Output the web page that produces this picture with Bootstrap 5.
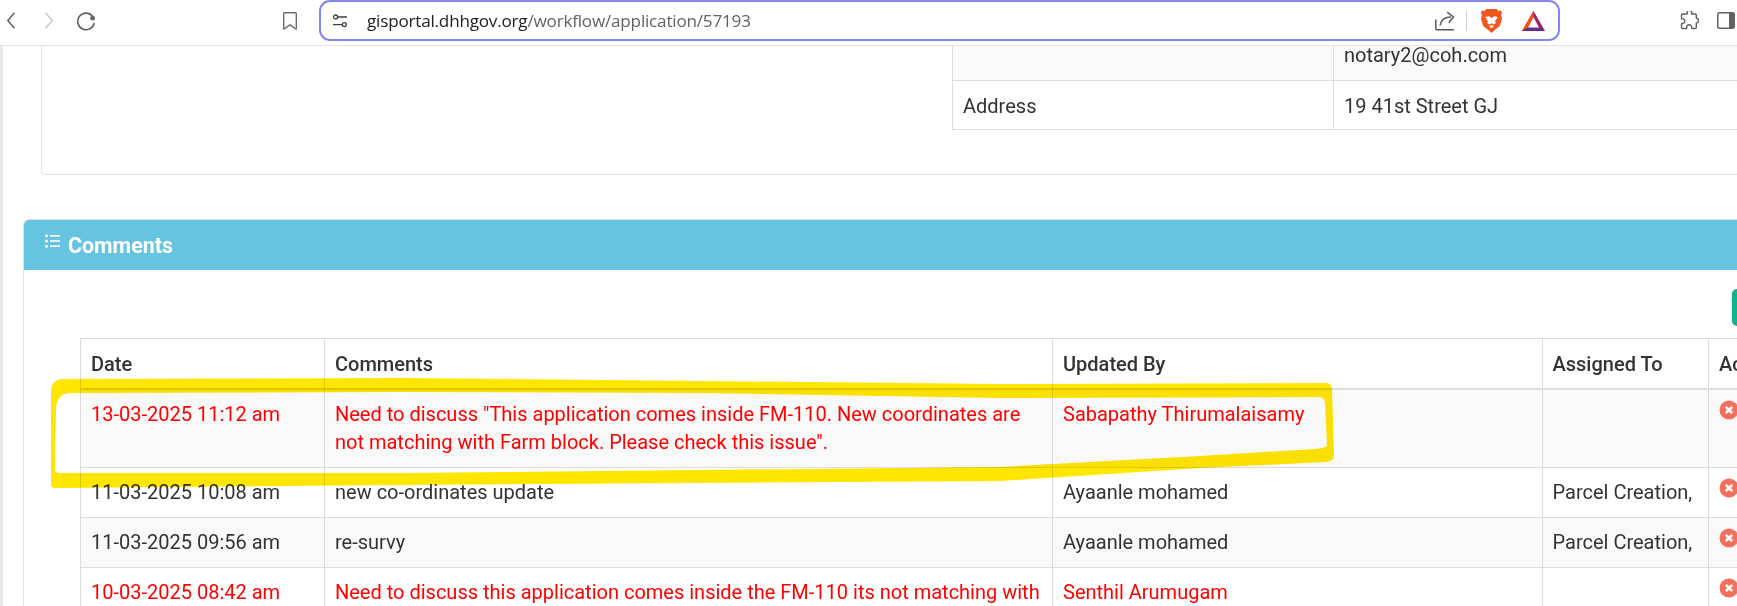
<!DOCTYPE html>
<html lang="en">
<head>
<meta charset="utf-8">
<title>Application 57193</title>
<link href="https://cdn.jsdelivr.net/npm/bootstrap@5.3.0/dist/css/bootstrap.min.css" rel="stylesheet">
<style>
html,body{width:1737px;height:606px;overflow:hidden;background:#fff}
body{font-family:Roboto,sans-serif;font-size:20px;line-height:28px;color:#333;position:relative}
.tb{height:46px;padding-bottom:4px;border-bottom:1px solid #e3e3e3;background:#fff;position:relative;z-index:2}
.tb svg{display:block;flex:none}
.tb-back{margin-left:7px}
.tb-fwd{margin-left:30px}
.tb-rel{margin-left:23px}
.tb-mark{margin-left:187px}
.urlbox{margin-left:22px;width:1241px;height:41px;border:2.5px solid #8585ee;border-top-width:2px;border-radius:11px;flex:none;padding:0 13px 0 12px;background:#fff}
.urltxt{margin-left:20px;font:17.1px/1 "Open Sans",sans-serif;color:#5f6368;white-space:nowrap;letter-spacing:-.2px}
.urltxt b{font-weight:400;color:#202124}
.tb-share{margin-left:auto}
.tb-div{width:1px;height:20px;background:#cfcfcf;margin:0 14px 0 11px}
.tb-bat{margin-left:20px}
.tb-puz{margin-left:120px}
.tb-side{margin-left:18px}
.stage{width:1900px}
.strip{width:3px;background:#e9e9e9;flex:none}
.inner{padding-left:20px;flex:none;width:1897px}
.card-a{margin-left:18px;height:128.5px;border-top:0;border-radius:0 0 5px 5px;border-color:#e3e3e3;padding-left:910px}
.tbl{border-collapse:collapse;table-layout:fixed;color:#333}
.tbl td,.tbl th{border:1px solid #ddd;vertical-align:top}
.tbl-a{width:900px}
.tbl-a td{padding:11px 10px 9px}
.tbl-a tr:first-child td{background:#f9f9f9;border-top:0;padding:0 10px;height:34px}
.tbl-a tr:first-child td:last-child{line-height:18px}
.wa1{width:381px}
.card-b{margin-top:44px;border-radius:5px 5px 0 0;border-color:#e3e3e3;height:500px}
.head-b{background:#67c4e0;color:#fff;height:50.5px;border:0;border-radius:5px 5px 0 0!important;padding:2px 0 0 21px;font-size:21.4px;font-weight:700}
.head-b svg{margin:-10px 8px 0 0;flex:none}
.body-b{padding:19px 0 0 56px}
.addbtn{display:block;margin-left:1652px;width:100px;height:37px;background:#10b48c;border:0;border-radius:5px;padding:0}
.tbl-b{margin-top:12px;width:1728px}
.tbl-b th{font-weight:500;padding:11px 10px 9px;height:50px;border-bottom:2px solid #ddd}
.tbl-b td{padding:10px 10px 11px;height:49px}
.tbl-b tbody tr:first-child td{height:78px;padding-bottom:11px}
.tbl-b tbody tr:nth-child(odd) td{background:#f9f9f9}
.tbl-b .red td{color:#f00}
.c1{width:244px}.c2{width:728px}.c3{width:489.5px}.c4{width:166.5px}.c5{width:100px}
.xicon{display:block;margin-top:0;margin-left:0}
.mark-ink{position:absolute;left:0;top:0;pointer-events:none;mix-blend-mode:multiply;z-index:3}
</style>
</head>
<body>
<div class="tb d-flex align-items-center">
  <svg class="tb-back" width="8" height="17" viewBox="0 0 8 17"><path d="M7.5.7.8 8.5l6.7 7.8" fill="none" stroke="#5f6368" stroke-width="1.5"/></svg>
  <svg class="tb-fwd" width="8" height="17" viewBox="0 0 8 17"><path d="M.5.7l6.7 7.8-6.7 7.8" fill="none" stroke="#c4c6c9" stroke-width="1.5"/></svg>
  <svg class="tb-rel" width="20" height="20" viewBox="0 0 20 20"><path d="M16.5 5.2A8.3 8.3 0 1 0 18.2 12" fill="none" stroke="#5f6368" stroke-width="1.6"/><circle cx="16.6" cy="7.2" r="2.4" fill="#5f6368"/></svg>
  <svg class="tb-mark" width="14" height="18" viewBox="0 0 14 18"><path d="M1.7.8h10.6a1 1 0 0 1 1 1v15.3L7 12.8.7 17.1V1.8a1 1 0 0 1 1-1z" fill="none" stroke="#6a6d71" stroke-width="1.4" stroke-linejoin="round"/></svg>
  <div class="urlbox d-flex align-items-center">
    <svg width="14" height="14" viewBox="0 0 14 14"><g fill="none" stroke="#3c4043" stroke-width="1.3"><circle cx="2.6" cy="3" r="2"/><path d="M4.8 3H14M0 10.6h9"/><circle cx="11.3" cy="10.6" r="2"/></g></svg>
    <span class="urltxt"><b>gisportal.dhhgov.org</b>/workflow/application/57193</span>
    <svg class="tb-share" width="20" height="20" viewBox="0 0 20 20"><path d="M.8 8.5v9a1.3 1.3 0 0 0 1.3 1.3h16a1.3 1.3 0 0 0 .9-.4M5 14.5C6 8.5 10 6 16 6" fill="none" stroke="#55595e" stroke-width="1.5"/><path d="M12.2 1.2 18.5 6l-4.8 5.8" fill="none" stroke="#55595e" stroke-width="1.5"/></svg>
    <span class="tb-div"></span>
    <svg width="21" height="24" viewBox="0 0 21 24"><path d="M5.3 0h10.4l1.7 1.9 2.4-.3 1.2 1.6-.8 3 .8 3.6-2.2 7.2-4.6 3.6L10.5 24l-3.700-3.400-4.600-3.600L0 9.800l.8-3.600-.8-3 1.200-1.600 2.400.3z" fill="#f1561f"/><path d="M10.500 9 7.800 7.300 4.300 8.100l2.800 4.300-1.100 1.400 2.100 1.600 2.400-1.100 2.400 1.100 2.100-1.600-1.100-1.400 2.800-4.300-3.500-.8zM8 17l2.500 2.300L13 17l-2.500-1.100z" fill="#fff"/></svg>
    <svg class="tb-bat" width="23" height="20" viewBox="0 0 23 20"><path d="M11.500 0 23 20H0z" fill="#9e1f63"/><path d="M11.500 0 0 20l5.200-3.100 6.300-11z" fill="#ff5000"/><path d="M0 20h23l-5.200-3.100H5.200z" fill="#662d91"/><path d="M11.500 6 6 16.500h11z" fill="#fff"/></svg>
  </div>
  <svg class="tb-puz" width="19" height="19" viewBox="0 0 19 19"><path d="M7.200 1a2.300 2.300 0 0 1 4.500.3v1.700h3.600c.6 0 1 .4 1 1v3.200h.5a2.400 2.400 0 0 1 0 4.700h-.5v4.600c0 .6-.4 1-1 1h-3.600v-1.200a2.500 2.500 0 0 0-5 0v1.200H2.500c-.6 0-1-.4-1-1v-4h1.100a2.300 2.300 0 0 0 0-4.600H1.500V4c0-.6.400-1 1-1h4.700z" fill="none" stroke="#5f6368" stroke-width="1.400" stroke-linejoin="round"/></svg>
  <svg class="tb-side" width="18" height="17" viewBox="0 0 18 17"><rect x=".8" y=".8" width="16.400" height="15.400" rx="1.500" fill="none" stroke="#5f6368" stroke-width="1.500"/><rect x="12" y="1" width="5" height="15" fill="#5f6368"/></svg>
</div>

<div class="stage d-flex">
  <div class="strip"></div>
  <div class="inner">
    <div class="card card-a">
      <table class="tbl tbl-a">
        <colgroup><col class="wa1"><col></colgroup>
        <tr><td></td><td>notary2@coh.com</td></tr>
        <tr><td>Address</td><td>19 41st Street GJ</td></tr>
      </table>
    </div>
    <div class="card card-b">
      <div class="card-header head-b d-flex align-items-center">
        <svg width="15" height="14" viewBox="0 0 15 14"><g fill="#fff"><circle cx="1.500" cy="1.800" r="1.500"/><circle cx="1.500" cy="7" r="1.500"/><circle cx="1.500" cy="12.200" r="1.500"/><rect x="5" y="1" width="10" height="1.600"/><rect x="5" y="6.200" width="10" height="1.600"/><rect x="5" y="11.400" width="10" height="1.600"/></g></svg>
        <span>Comments</span>
      </div>
      <div class="body-b">
        <button class="addbtn" type="button" aria-label="Add comment"></button>
        <table class="tbl tbl-b">
          <colgroup><col class="c1"><col class="c2"><col class="c3"><col class="c4"><col class="c5"></colgroup>
          <thead><tr><th>Date</th><th>Comments</th><th>Updated By</th><th>Assigned To</th><th>Action</th></tr></thead>
          <tbody>
            <tr class="red"><td>13-03-2025 11:12 am</td><td>Need to discuss "This application comes inside FM-110. New coordinates are not matching with Farm block. Please check this issue".</td><td>Sabapathy Thirumalaisamy</td><td></td><td><svg class="xicon" width="20" height="20" viewBox="0 0 20 20"><circle cx="10" cy="10" r="9.500" fill="#f4705c"/><path d="M6.800 6.800l6.400 6.400m0-6.400-6.400 6.400" stroke="#fff" stroke-width="2.600"/></svg></td></tr>
            <tr><td>11-03-2025 10:08 am</td><td>new co-ordinates update</td><td>Ayaanle mohamed</td><td>Parcel Creation,</td><td><svg class="xicon" width="20" height="20" viewBox="0 0 20 20"><circle cx="10" cy="10" r="9.500" fill="#f4705c"/><path d="M6.800 6.800l6.400 6.400m0-6.400-6.400 6.400" stroke="#fff" stroke-width="2.600"/></svg></td></tr>
            <tr><td>11-03-2025 09:56 am</td><td>re-survy</td><td>Ayaanle mohamed</td><td>Parcel Creation,</td><td><svg class="xicon" width="20" height="20" viewBox="0 0 20 20"><circle cx="10" cy="10" r="9.500" fill="#f4705c"/><path d="M6.800 6.800l6.400 6.400m0-6.400-6.400 6.400" stroke="#fff" stroke-width="2.600"/></svg></td></tr>
            <tr class="red"><td>10-03-2025 08:42 am</td><td>Need to discuss this application comes inside the FM-110 its not matching with</td><td>Senthil Arumugam</td><td></td><td><svg class="xicon" width="20" height="20" viewBox="0 0 20 20"><circle cx="10" cy="10" r="9.500" fill="#f4705c"/><path d="M6.800 6.800l6.400 6.400m0-6.400-6.400 6.400" stroke="#fff" stroke-width="2.600"/></svg></td></tr>
          </tbody>
        </table>
      </div>
    </div>
  </div>
</div>

<svg class="mark-ink" width="1737" height="606" viewBox="0 0 1737 606"><path fill="#ffe600" fill-rule="evenodd" d="M62 379 400 378 700 381 1000 384 1326 383Q1332 383 1332 390L1334 455Q1334 461 1326 462L1200 468 1000 481 700 483 400 485 55 488Q51 488 51 484L51 392Q51 380 62 379ZM70 393Q56 394 56 410L55 470Q55 473 60 473L400 473 700 470 1000 467 1200 456 1315 449Q1327 448 1327 445L1325 402Q1324 397 1318 397L1000 398 700 393 400 392Z"/></svg>
<script src="https://cdn.jsdelivr.net/npm/bootstrap@5.3.0/dist/js/bootstrap.bundle.min.js"></script>
</body>
</html>
